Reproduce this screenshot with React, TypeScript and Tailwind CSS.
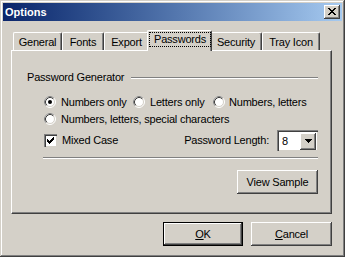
import React from "react";

const font = { fontFamily: '"Liberation Sans", Arial, sans-serif' };

function Radio({ checked }: { checked?: boolean }) {
  return (
    <svg width="12" height="12" viewBox="0 0 12 12" className="shrink-0">
      <circle cx="6" cy="6" r="5" fill="#ffffff" />
      <circle cx="6" cy="6" r="5.5" fill="none" stroke="#ffffff" strokeWidth="1" />
      <path d="M2.11 9.89 A5.5 5.5 0 0 1 9.89 2.11" fill="none" stroke="#808080" strokeWidth="1" />
      <circle cx="6" cy="6" r="4.5" fill="none" stroke="#D4D0C8" strokeWidth="1" />
      <path d="M2.82 9.18 A4.5 4.5 0 0 1 9.18 2.82" fill="none" stroke="#404040" strokeWidth="1" />
      {checked && <circle cx="6" cy="6" r="2" fill="#000000" />}
    </svg>
  );
}

function Checkbox() {
  const cols = [2, 3, 4, 3, 2, 1, 0];
  return (
    <div className="w-[13px] h-[13px] shrink-0 bg-white border-t border-l border-[#808080] border-r-white border-b-white shadow-[inset_1px_1px_#404040,inset_-1px_-1px_#D4D0C8] relative">
      <svg width="13" height="13" viewBox="0 0 13 13" className="absolute left-[-1px] top-[-1px]" shapeRendering="crispEdges">
        {cols.map((r, i) => (
          <rect key={i} x={3 + i} y={3 + r} width="1" height="3" fill="#000" />
        ))}
      </svg>
    </div>
  );
}

function Btn({ children, w, def }: { children: React.ReactNode; w: string; def?: boolean }) {
  return (
    <div
      className={`${w} h-[24px] flex items-center justify-center text-[11px] text-black ${
        def
          ? "border border-black shadow-[inset_-1px_-1px_#404040,inset_1px_1px_#ffffff,inset_-2px_-2px_#808080]"
          : "shadow-[inset_-1px_-1px_#404040,inset_1px_1px_#ffffff,inset_-2px_-2px_#808080,inset_2px_2px_#D4D0C8]"
      }`}
    >
      {children}
    </div>
  );
}

function Tab({ label, w }: { label: string; w: string }) {
  return (
    <div
      className={`${w} h-[18px] flex items-center justify-center pt-[1px] text-[11px] text-black border-t border-l border-white border-r border-r-[#404040] rounded-t-[2px] shadow-[inset_-1px_0_#808080]`}
    >
      {label}
    </div>
  );
}

export default function App() {
  return (
    <div style={font} className="w-[345px] h-[257px] bg-[#D4D0C8] p-[3px] shadow-[inset_-1px_-1px_#404040,inset_1px_1px_#D4D0C8,inset_-2px_-2px_#808080,inset_2px_2px_#ffffff] text-black tracking-[-0.2px]">
      {/* title bar */}
      <div className="h-[18px] flex items-center justify-between pl-[2px] pr-[2px] bg-gradient-to-r from-[#0A246A] to-[#A6CAF0]">
        <span className="text-white font-bold text-[11px] tracking-normal">Options</span>
        <div className="w-[16px] h-[14px] bg-[#D4D0C8] shadow-[inset_-1px_-1px_#404040,inset_1px_1px_#ffffff,inset_-2px_-2px_#808080] relative">
          <svg width="16" height="14" viewBox="0 0 16 14" className="absolute left-0 top-0" shapeRendering="crispEdges">
            {[0, 1, 2, 3, 4, 5, 6].map((i) => (
              <g key={i}>
                <rect x={4 + i} y={3 + i} width="2" height="1" fill="#000" />
                <rect x={10 - i} y={3 + i} width="2" height="1" fill="#000" />
              </g>
            ))}
          </svg>
        </div>
      </div>

      {/* body */}
      <div className="pl-[8px] pt-[9px]">
        {/* tabs */}
        <div className="flex items-end h-[20px] pl-[2px]">
          <Tab label="General" w="w-[49px]" />
          <Tab label="Fonts" w="w-[42px]" />
          <Tab label="Export" w="w-[45px]" />
          <div className="relative z-10 w-[65px] h-[21px] -mx-[2px] mb-[-1px] bg-[#D4D0C8] border-t border-l border-white border-r border-r-[#404040] rounded-t-[2px] shadow-[inset_-1px_0_#808080] pl-[1px] pt-[1px] pr-[1px]">
            <div className="h-[15px] w-[62px] border border-dotted border-black flex items-center justify-center text-[11px]">
              Passwords
            </div>
          </div>
          <Tab label="Security" w="w-[52px]" />
          <Tab label="Tray Icon" w="w-[58px]" />
        </div>

        {/* panel */}
        <div className="w-[321px] h-[164px] border-t border-l border-white border-r border-b border-r-[#404040] border-b-[#404040] shadow-[inset_-1px_-1px_#808080] pt-[20px] pr-[13px] text-[11px]">
          <div className="flex items-center h-[13px] pl-[15px]">
            <span className="whitespace-nowrap">Password Generator</span>
            <div className="flex-1 ml-[7px] h-[2px] border-t border-[#808080] border-b border-b-white" />
          </div>

          <div className="pl-[32px]">
            <div className="flex items-center h-[12px] mt-[12px]">
              <div className="w-[89px] flex items-center gap-[5px] shrink-0">
                <Radio checked />
                <span className="whitespace-nowrap">Numbers only</span>
              </div>
              <div className="w-[80px] flex items-center gap-[5px] shrink-0">
                <Radio />
                <span className="whitespace-nowrap">Letters only</span>
              </div>
              <div className="flex items-center gap-[4px]">
                <Radio />
                <span className="whitespace-nowrap">Numbers, letters</span>
              </div>
            </div>
            <div className="flex items-center h-[12px] mt-[5px] gap-[5px]">
              <Radio />
              <span className="whitespace-nowrap">Numbers, letters, special characters</span>
            </div>
            <div className="flex items-center h-[21px] mt-[5px]">
              <Checkbox />
              <span className="ml-[5px] whitespace-nowrap">Mixed Case</span>
              <span className="ml-auto mr-[8px] whitespace-nowrap">Password Length:</span>
              <div className="w-[41px] h-[21px] bg-white border-t border-l border-[#808080] border-r-white border-b-white shadow-[inset_1px_1px_#404040,inset_-1px_-1px_#D4D0C8] flex items-center p-[2px]">
                <span className="flex-1 pl-[2px] leading-none">8</span>
                <div className="w-[16px] h-[17px] bg-[#D4D0C8] shadow-[inset_-1px_-1px_#404040,inset_1px_1px_#ffffff,inset_-2px_-2px_#808080] flex items-center justify-center">
                  <svg width="7" height="4" viewBox="0 0 7 4" shapeRendering="crispEdges">
                    <path d="M0 0H7V1H6V2H5V3H4V4H3V3H2V2H1V1H0Z" fill="#000" />
                  </svg>
                </div>
              </div>
            </div>
            <div className="-ml-[1px] mt-[6px] h-[2px] border-t border-[#808080] border-b border-b-white" />
            <div className="flex justify-end mt-[11px]">
              <Btn w="w-[81px]">View Sample</Btn>
            </div>
          </div>
        </div>

        {/* buttons */}
        <div className="w-[321px] flex justify-end gap-[8px] mt-[8px]">
          <Btn w="w-[80px]" def>
            <span><span className="underline">O</span>K</span>
          </Btn>
          <Btn w="w-[81px]">
            <span><span className="underline">C</span>ancel</span>
          </Btn>
        </div>
      </div>
    </div>
  );
}
